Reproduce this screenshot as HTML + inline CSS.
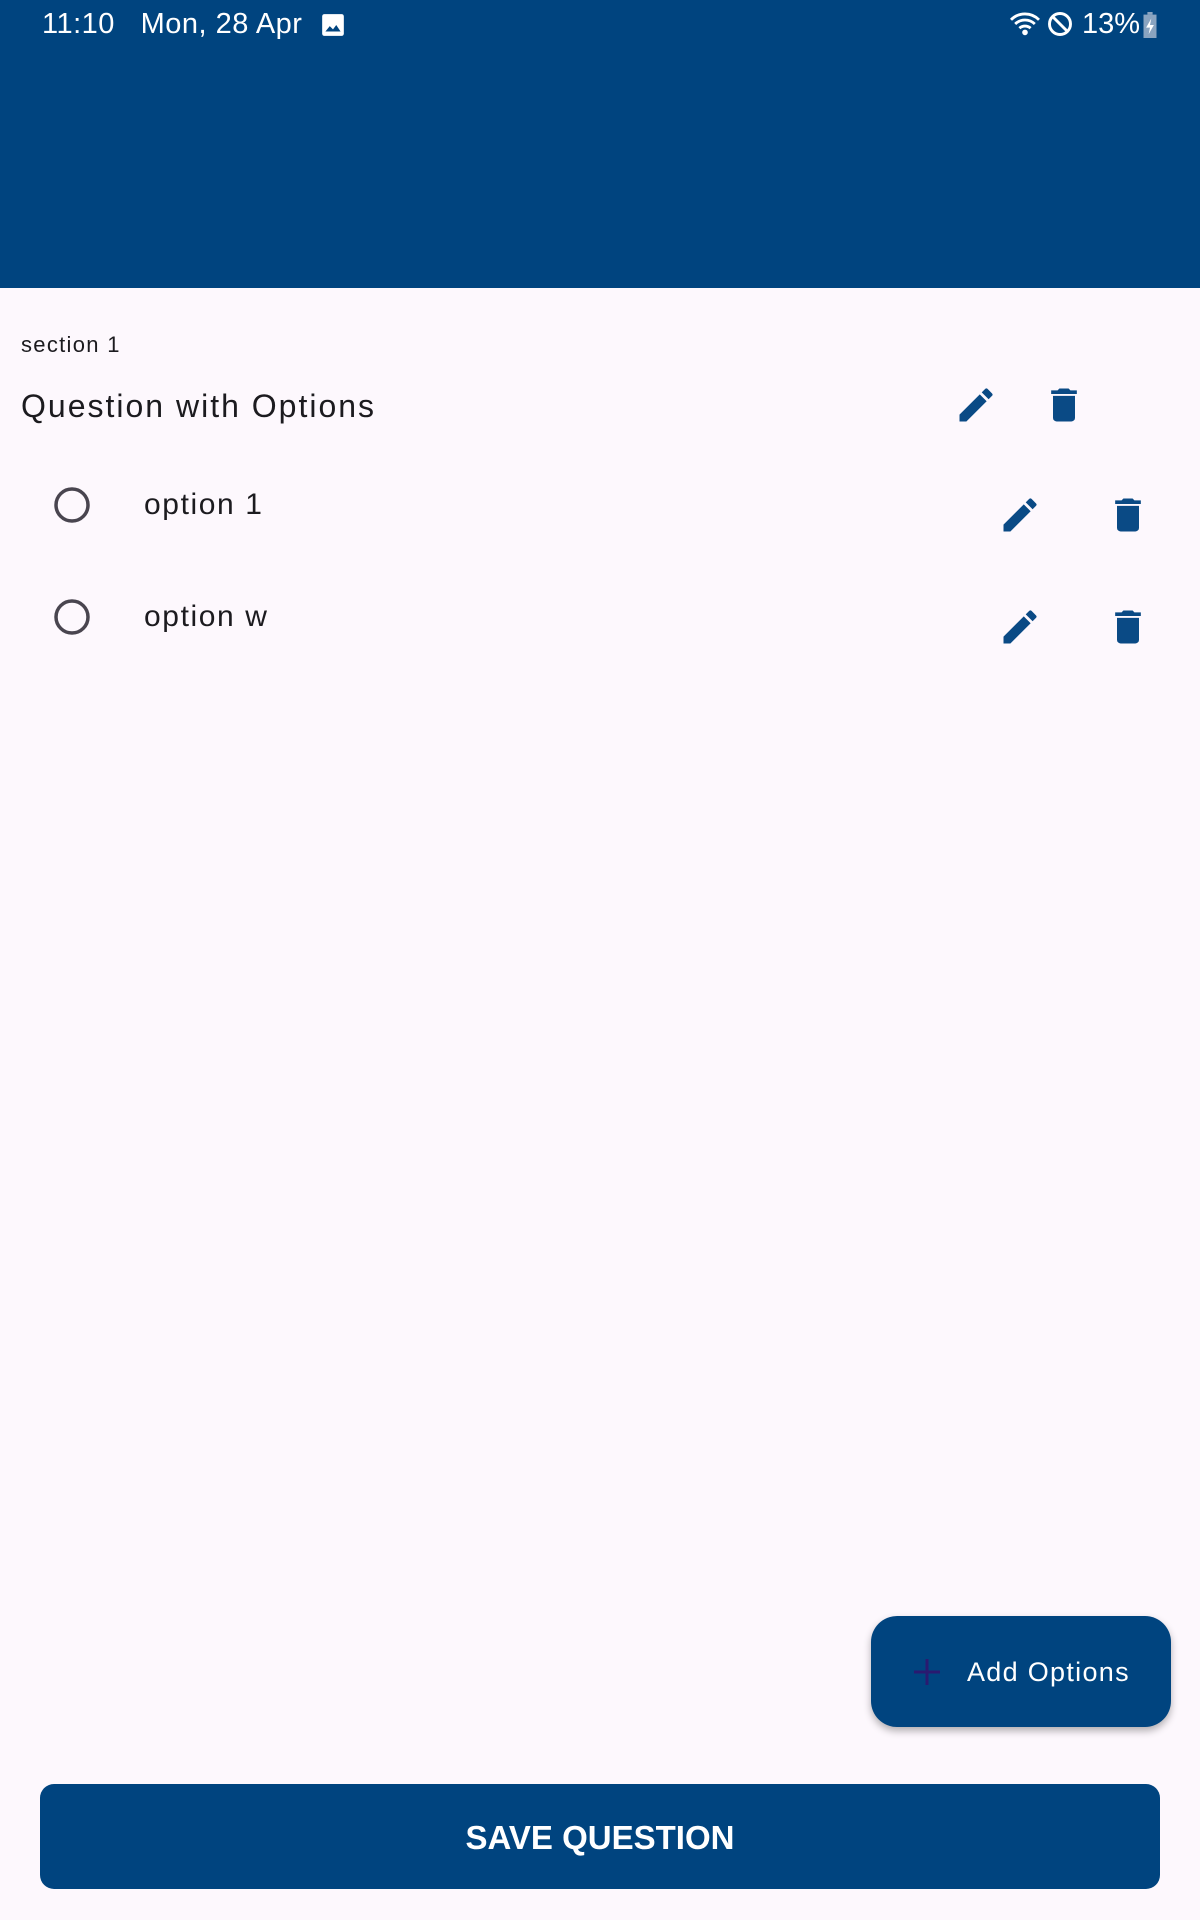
<!DOCTYPE html>
<html><head><meta charset="utf-8"><style>
*{margin:0;padding:0;box-sizing:border-box}
body{width:1200px;height:1920px;background:#fdf8fd;font-family:"Liberation Sans",sans-serif;position:relative;overflow:hidden;color:#1c1b1f}
.hdr{position:absolute;left:0;top:0;width:1200px;height:288px;background:#00447f}
.st{position:absolute;top:8px;color:#fff;font-size:29px}
.abs{position:absolute}
svg.ic{position:absolute;fill:#0a4a85}
</style></head><body>
<div class="hdr">
<div class="st" style="left:42px;letter-spacing:0.5px">11:10&nbsp;&nbsp; Mon, 28 Apr</div>
<svg class="abs" style="left:320px;top:12px" width="26" height="26" viewBox="0 0 24 24"><rect x="2" y="2" width="20" height="20" rx="2" fill="#fff"/><path d="M5 18l4-5 3 3 3-4 4 6z" fill="#00447f"/></svg>
<svg class="abs" style="left:1008px;top:10px" width="34" height="28" viewBox="0 0 24 20"><path d="M2 7a14 14 0 0 1 20 0M5 10a10 10 0 0 1 14 0M8 13a6 6 0 0 1 8 0" stroke="#fff" stroke-width="2" fill="none"/><circle cx="12" cy="16" r="2" fill="#fff"/></svg>
<svg class="abs" style="left:1046px;top:10px" width="28" height="28" viewBox="0 0 24 24"><circle cx="12" cy="12" r="9" stroke="#fff" stroke-width="2.5" fill="none"/><path d="M6 6l12 12" stroke="#fff" stroke-width="2.5"/></svg>
<div class="st" style="left:1082px">13%</div>
<svg class="abs" style="left:1142px;top:12px" width="16" height="26" viewBox="0 0 12 20"><rect x="1" y="2" width="10" height="18" fill="#8aa4c0"/><rect x="4" y="0" width="4" height="2" fill="#8aa4c0"/><path d="M7 5l-4 7h3l-1 5 4-7H6z" fill="#fff"/></svg>
</div>
<div class="abs" style="left:21px;top:332px;font-size:22px;letter-spacing:1.3px">section 1</div>
<div class="abs" style="left:21px;top:388px;font-size:32px;letter-spacing:2px">Question with Options</div>
<svg class="ic" style="left:954px;top:383px" width="44" height="44" viewBox="0 0 24 24"><path d="M3 17.25V21h3.75L17.81 9.94l-3.75-3.75L3 17.25zM20.71 7.04a1 1 0 0 0 0-1.41l-2.34-2.34a1 1 0 0 0-1.41 0l-1.83 1.83 3.75 3.75 1.83-1.83z"/></svg>
<svg class="ic" style="left:1042px;top:383px" width="44" height="44" viewBox="0 0 24 24"><path d="M6 19a2 2 0 0 0 2 2h8a2 2 0 0 0 2-2V7H6v12zM19 4h-3.5l-1-1h-5l-1 1H5v2h14V4z"/></svg>

<svg class="abs" style="left:52px;top:485px" width="40" height="40"><circle cx="20" cy="20" r="16" stroke="#49454f" stroke-width="3.5" fill="none"/></svg>
<div class="abs" style="left:144px;top:488px;font-size:30px;letter-spacing:1.6px">option 1</div>
<svg class="ic" style="left:998px;top:493px" width="44" height="44" viewBox="0 0 24 24"><path d="M3 17.25V21h3.75L17.81 9.94l-3.75-3.75L3 17.25zM20.71 7.04a1 1 0 0 0 0-1.41l-2.34-2.34a1 1 0 0 0-1.41 0l-1.83 1.83 3.75 3.75 1.83-1.83z"/></svg>
<svg class="ic" style="left:1106px;top:493px" width="44" height="44" viewBox="0 0 24 24"><path d="M6 19a2 2 0 0 0 2 2h8a2 2 0 0 0 2-2V7H6v12zM19 4h-3.5l-1-1h-5l-1 1H5v2h14V4z"/></svg>

<svg class="abs" style="left:52px;top:597px" width="40" height="40"><circle cx="20" cy="20" r="16" stroke="#49454f" stroke-width="3.5" fill="none"/></svg>
<div class="abs" style="left:144px;top:600px;font-size:30px;letter-spacing:1.6px">option w</div>
<svg class="ic" style="left:998px;top:605px" width="44" height="44" viewBox="0 0 24 24"><path d="M3 17.25V21h3.75L17.81 9.94l-3.75-3.75L3 17.25zM20.71 7.04a1 1 0 0 0 0-1.41l-2.34-2.34a1 1 0 0 0-1.41 0l-1.83 1.83 3.75 3.75 1.83-1.83z"/></svg>
<svg class="ic" style="left:1106px;top:605px" width="44" height="44" viewBox="0 0 24 24"><path d="M6 19a2 2 0 0 0 2 2h8a2 2 0 0 0 2-2V7H6v12zM19 4h-3.5l-1-1h-5l-1 1H5v2h14V4z"/></svg>

<div class="abs" style="left:871px;top:1616px;width:300px;height:111px;background:#00447f;border-radius:26px;box-shadow:0 4px 8px rgba(0,0,0,.3)">
<svg class="abs" style="left:41px;top:41px" width="30" height="30"><path d="M15 2v26M2 15h26" stroke="#2a1a70" stroke-width="3"/></svg>
<div class="abs" style="left:96px;top:41px;color:#fff;font-size:27px;letter-spacing:1.3px">Add Options</div>
</div>
<div class="abs" style="left:40px;top:1784px;width:1120px;height:105px;background:#00447f;border-radius:14px;color:#fff;font-size:33px;font-weight:bold;text-align:center;line-height:107px">SAVE QUESTION</div>
</body></html>
